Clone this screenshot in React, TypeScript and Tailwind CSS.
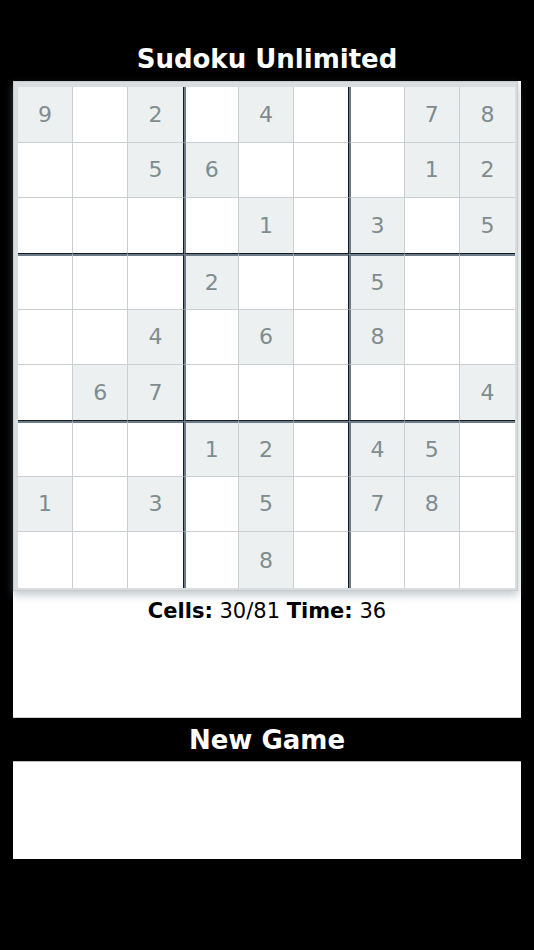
import React from "react";

const board: number[][] = [
  [9, 0, 2, 0, 4, 0, 0, 7, 8],
  [0, 0, 5, 6, 0, 0, 0, 1, 2],
  [0, 0, 0, 0, 1, 0, 3, 0, 5],
  [0, 0, 0, 2, 0, 0, 5, 0, 0],
  [0, 0, 4, 0, 6, 0, 8, 0, 0],
  [0, 6, 7, 0, 0, 0, 0, 0, 4],
  [0, 0, 0, 1, 2, 0, 4, 5, 0],
  [1, 0, 3, 0, 5, 0, 7, 8, 0],
  [0, 0, 0, 0, 8, 0, 0, 0, 0],
];

function Cell({ v, r, c }: { v: number; r: number; c: number }) {
  const cls = [
    "flex items-center justify-center text-[22px] text-[#7f8c8d] box-border",
    v ? "bg-[#ecf0f1]" : "bg-white",
    c === 8 ? "" : c === 2 || c === 5 ? "border-r border-r-[#1a1a1a]" : "border-r border-r-[#c8ced2]",
    r === 8 ? "" : r === 2 || r === 5 ? "border-b border-b-[#1a1a1a]" : "border-b border-b-[#c8ced2]",
    c === 3 || c === 6 ? "border-l-2 border-l-[#6b7b8a]" : "",
    r === 3 || r === 6 ? "border-t-2 border-t-[#6b7b8a]" : "",
  ].join(" ");
  return <div className={cls}>{v ? v : ""}</div>;
}

export default function App() {
  return (
    <div
      className="w-[534px] h-[950px] bg-black flex flex-col"
      style={{ fontFamily: '"DejaVu Sans", Verdana, sans-serif' }}
    >
      <div className="h-[81px] flex items-end justify-center pb-[7px]">
        <h1 className="text-white font-bold text-[26px] leading-[30px]">Sudoku Unlimited</h1>
      </div>
      <div className="mx-[13px] w-[508px] h-[637px] bg-white border-b border-b-[#c9cdd0] flex flex-col">
        <div className="w-[505px] h-[510px] bg-[#d9dde0] border border-[#c6cbce] pl-[4px] pt-[5px] pr-[2px] pb-[2px] shadow-[0_4px_8px_rgba(120,135,145,0.45)]">
          <div className="w-[497px] h-[501px] grid grid-cols-9 grid-rows-9">
            {board.map((row, r) =>
              row.map((v, c) => <Cell key={`${r}-${c}`} v={v} r={r} c={c} />)
            )}
          </div>
        </div>
        <div className="mt-[7px] text-center text-[21px] leading-[26px] text-black">
          <span className="font-bold">Cells:</span> 30/81 <span className="font-bold">Time:</span> 36
        </div>
      </div>
      <div className="h-[43px] flex items-center justify-center">
        <span className="text-white font-bold text-[26px] leading-[30px]">New Game</span>
      </div>
      <div className="mx-[13px] w-[508px] h-[98px] bg-white border-t border-t-[#b8bcbf]" />
    </div>
  );
}
